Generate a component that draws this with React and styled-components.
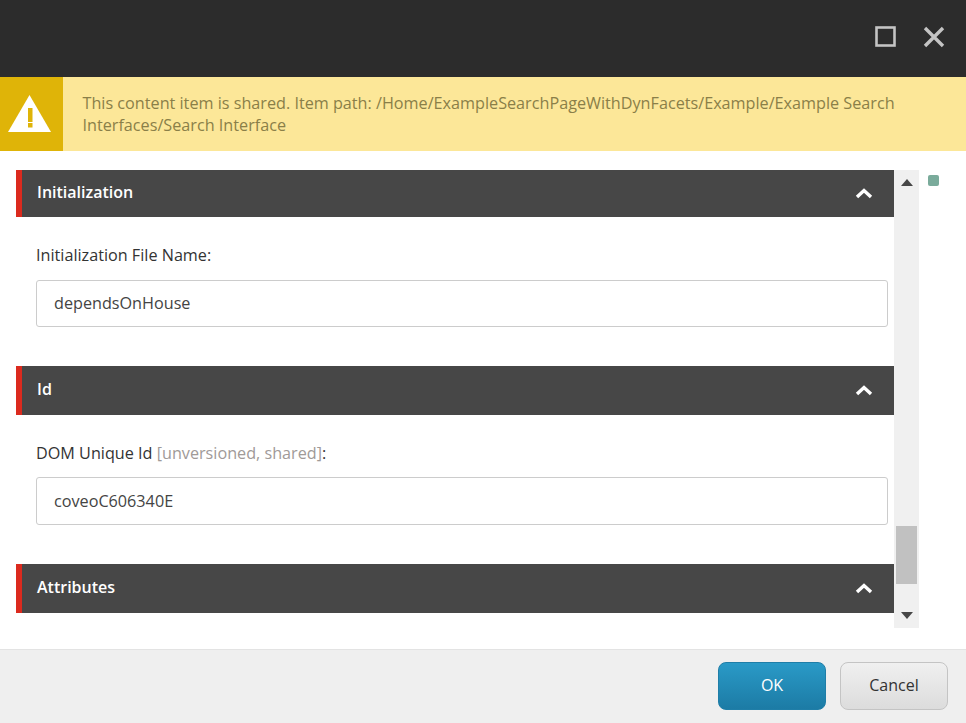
import React from 'react';
import styled, { createGlobalStyle } from 'styled-components';

const GlobalStyle = createGlobalStyle`
  html, body {
    margin: 0;
    padding: 0;
    background: #fff;
  }
  body {
    font-family: "Open Sans", "Liberation Sans", sans-serif;
    color: #333;
  }
`;

const Dialog = styled.div`
  width: 966px;
  height: 723px;
  display: flex;
  flex-direction: column;
  overflow: hidden;
`;

// Title bar
const TitleBar = styled.div`
  height: 77px;
  flex: none;
  background: #2c2c2c;
  display: flex;
  align-items: flex-start;
  justify-content: flex-end;
  gap: 26px;
  padding: 26px 21px 0 0;
  box-sizing: border-box;
`;

const WindowButton = styled.svg`
  width: 22px;
  height: 22px;
  display: block;
  color: #c4c4c4;
`;

// Warning
const Warning = styled.div`
  height: 74px;
  flex: none;
  background: #fce798;
  display: flex;
`;

const WarningIcon = styled.div`
  width: 63px;
  flex: none;
  box-sizing: border-box;
  padding: 0 12px 1px 8px;
  background: #dfb408;
  display: flex;
  align-items: center;
`;

const WarningText = styled.div`
  padding: 15px 60px 0 19.5px;
  font-size: 16.2px;
  line-height: 22px;
  color: #8a7f48;
`;

// Body
const Body = styled.div`
  flex: 1;
  min-height: 0;
  display: flex;
  padding: 19px 0 0 16px;
`;

const Scroller = styled.div`
  width: 878px;
  height: 458px;
  flex: none;
  overflow: hidden;
`;

const SectionHeader = styled.div`
  height: ${({ $height }) => $height}px;
  background: #474747;
  border-left: 6px solid #db2a1e;
  box-sizing: border-box;
  display: flex;
  align-items: center;
  justify-content: space-between;
  padding: 0 21px 0 15px;
  color: #fff;
  font-size: 16px;
  font-weight: 600;
`;

const SectionTitle = styled.span`
  position: relative;
  top: -2px;
`;

const Chevron = styled.svg`
  width: 18px;
  height: 12px;
  display: block;
`;

const Field = styled.div`
  padding: 27px 6px 39px 20px;
`;

const Label = styled.div`
  font-size: 16.2px;
  line-height: 22px;
  color: #333;
  margin-bottom: ${({ $gap }) => $gap}px;
`;

const Muted = styled.span`
  color: #a09a98;
`;

const Input = styled.div`
  height: ${({ $height }) => $height}px;
  box-sizing: border-box;
  border: 1px solid #ccc;
  border-radius: 3px;
  background: #fff;
  display: flex;
  align-items: center;
  padding: 0 17px ${({ $lift }) => $lift}px;
  font-size: 16.2px;
  color: #444;
`;

// Scrollbar
const Scrollbar = styled.div`
  width: 25px;
  height: 458px;
  flex: none;
  background: #f0f0f0;
  display: flex;
  flex-direction: column;
  align-items: center;
`;

const ArrowButton = styled.div`
  height: 25px;
  flex: none;
  display: flex;
  align-items: center;
  justify-content: center;
`;

const Arrow = styled.svg`
  width: 12px;
  height: 7px;
  display: block;
`;

const Track = styled.div`
  flex: 1;
  width: 21px;
`;

const Thumb = styled.div`
  width: 21px;
  height: 58px;
  background: #c1c1c1;
`;

const Marker = styled.div`
  width: 11px;
  height: 11px;
  flex: none;
  margin: 5px 0 0 9px;
  background: #7aab9b;
  border-radius: 2px;
`;

// Footer
const Footer = styled.div`
  height: 74px;
  flex: none;
  background: #efefef;
  border-top: 1px solid #e3e3e3;
  box-sizing: border-box;
  display: flex;
  justify-content: flex-end;
  gap: 14px;
  padding: 12px 18px 0 0;
`;

const Button = styled.div`
  width: 108px;
  height: 48px;
  box-sizing: border-box;
  border-radius: 8px;
  display: flex;
  align-items: center;
  justify-content: center;
  font-size: 16px;
  padding-bottom: 2px;
  border: 1px solid ${({ $primary }) => ($primary ? '#1f7ea8' : '#c4c4c4')};
  color: ${({ $primary }) => ($primary ? '#fff' : '#333')};
  background: ${({ $primary }) =>
    $primary
      ? 'linear-gradient(to bottom, #2a9ac7, #1c7ba5)'
      : 'linear-gradient(to bottom, #f0f0f0, #dcdcdc)'};
`;

const CollapseIcon = () => (
  <Chevron viewBox="0 0 18 12">
    <path d="M2 9 L9 2.5 L16 9" fill="none" stroke="#fff" strokeWidth="3.4" />
  </Chevron>
);

const Section = ({ title, height, children }) => (
  <>
    <SectionHeader $height={height}>
      <SectionTitle>{title}</SectionTitle>
      <CollapseIcon />
    </SectionHeader>
    {children}
  </>
);

export default function App() {
  return (
    <Dialog>
      <GlobalStyle />
      <TitleBar>
        <WindowButton viewBox="0 0 22 22">
          <rect x="1.5" y="1.5" width="18" height="18" fill="none" stroke="currentColor" strokeWidth="2.6" />
        </WindowButton>
        <WindowButton viewBox="0 0 22 22">
          <path d="M2 2 L20 20 M20 2 L2 20" fill="none" stroke="currentColor" strokeWidth="3.4" />
        </WindowButton>
      </TitleBar>

      <Warning>
        <WarningIcon>
          <svg width="43" height="37" viewBox="0 0 43 37">
            <path d="M21.5 0 L43 37 L0 37 Z" fill="#fff" />
            <rect x="20" y="13" width="4.5" height="14" fill="#dfb408" />
            <rect x="20" y="28" width="4.5" height="4.5" fill="#dfb408" />
          </svg>
        </WarningIcon>
        <WarningText>
          This content item is shared. Item path: /Home/ExampleSearchPageWithDynFacets/Example/Example Search
          Interfaces/Search Interface
        </WarningText>
      </Warning>

      <Body>
        <Scroller>
          <Section title="Initialization" height={47}>
            <Field>
              <Label $gap={14}>Initialization File Name:</Label>
              <Input $height={47} $lift={2}>dependsOnHouse</Input>
            </Field>
          </Section>
          <Section title="Id" height={49}>
            <Field>
              <Label $gap={13}>
                DOM Unique Id <Muted>[unversioned, shared]</Muted>:
              </Label>
              <Input $height={48} $lift={0}>coveoC606340E</Input>
            </Field>
          </Section>
          <Section title="Attributes" height={49} />
        </Scroller>

        <Scrollbar>
          <ArrowButton>
            <Arrow viewBox="0 0 12 7">
              <path d="M6 0 L12 7 L0 7 Z" fill="#474747" />
            </Arrow>
          </ArrowButton>
          <Track>
            <Thumb style={{ marginTop: 331 }} />
          </Track>
          <ArrowButton>
            <Arrow viewBox="0 0 12 7">
              <path d="M0 0 L12 0 L6 7 Z" fill="#474747" />
            </Arrow>
          </ArrowButton>
        </Scrollbar>

        <Marker />
      </Body>

      <Footer>
        <Button $primary>OK</Button>
        <Button>Cancel</Button>
      </Footer>
    </Dialog>
  );
}
